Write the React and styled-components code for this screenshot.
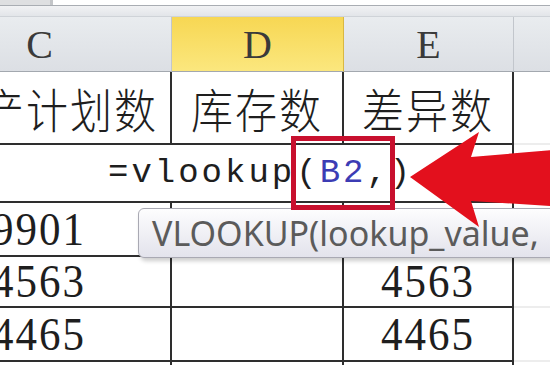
import React from "react";
import styled, { createGlobalStyle } from "styled-components";

const GlobalStyle = createGlobalStyle`
  html, body {
    margin: 0;
    padding: 0;
    background: #ffffff;
    overflow: hidden;
  }
`;

const Page = styled.div`
  position: relative;
  width: 550px;
  height: 365px;
  overflow: hidden;
  background: #ffffff;
`;

const FormulaStrip = styled.div`
  display: flex;
  height: 5px;
  border-bottom: 1px solid #a9adb3;
`;

const NameBox = styled.div`
  width: 50px;
  background: #dedfe1;
  border-right: 3px solid #c3c5c8;
`;

const FormulaInput = styled.div`
  flex: 1;
  background: #ffffff;
`;

const Band = styled.div`
  height: 10px;
  background: linear-gradient(#f1f2f4, #e2e5e9);
  border-bottom: 1px solid #cfd3d8;
`;

const Sheet = styled.div`
  display: grid;
  grid-template-columns: 264px 172px 170px 60px;
  grid-template-rows: 55px 73px 58px 54px 51px 54px 20px;
  margin-left: -92px;
`;

const ColHead = styled.div`
  display: flex;
  align-items: center;
  justify-content: center;
  box-sizing: border-box;
  border-right: 1px solid ${(p) => (p.$active ? "#d9b842" : "#c2c6cc")};
  border-bottom: 1px solid #a3a8af;
  background: ${(p) =>
    p.$active
      ? "linear-gradient(#f7d753, #fbe77e)"
      : "linear-gradient(#e9ecef, #dcdfe4)"};
  font-family: "Liberation Serif", serif;
  font-size: 40px;
  color: #3a3a3a;
`;

const Cell = styled.div`
  display: flex;
  align-items: center;
  justify-content: center;
  box-sizing: border-box;
  border-right: 2px solid ${(p) => (p.$blank ? "#ededed" : "#2e2e2e")};
  border-bottom: 2px solid ${(p) => (p.$blank ? "#ededed" : "#2e2e2e")};
  background: #ffffff;
  color: #1e1e1e;
  font-family: ${(p) =>
    p.$cjk
      ? '"Noto Sans CJK SC", sans-serif'
      : '"Liberation Serif", serif'};
  font-size: ${(p) => (p.$cjk ? "42px" : "43px")};
  font-weight: ${(p) => (p.$cjk ? 300 : 400)};
  letter-spacing: 2px;
  padding-left: ${(p) => p.$shift || 0}px;
  white-space: nowrap;
`;

const Tall = styled.span`
  display: inline-block;
  transform: scaleY(1.1);
`;

const EditCell = styled.div`
  grid-column: 1 / 4;
  position: relative;
  z-index: 3;
  display: flex;
  align-items: center;
  box-sizing: border-box;
  padding-left: 200px;
  border-right: 2px solid #2e2e2e;
  border-bottom: 2px solid #2e2e2e;
  background: #ffffff;
  font-family: "Liberation Mono", monospace;
  font-size: 34px;
  letter-spacing: 3px;
  color: #1e1e1e;
  white-space: nowrap;
`;

const RefBox = styled.span`
  display: inline-flex;
  align-items: center;
  height: 64px;
  margin: 0 -5px 0 -4px;
  border: 5px solid #c8102e;
`;

const RefName = styled.span`
  color: #3c3cb4;
`;

const Tooltip = styled.div`
  position: absolute;
  z-index: 2;
  left: 138px;
  top: 208px;
  width: 440px;
  height: 50px;
  box-sizing: border-box;
  padding-left: 13px;
  border: 1px solid #a9a9b3;
  border-radius: 6px;
  background: linear-gradient(#fdfdfe, #e3e3ec);
  box-shadow: 2px 3px 4px rgba(0, 0, 0, 0.2);
  font-family: "Noto Sans", sans-serif;
  font-size: 34px;
  line-height: 48px;
  color: #5b5b5b;
  white-space: nowrap;
`;

const Arrow = styled.svg`
  position: absolute;
  z-index: 4;
  left: 405px;
  top: 125px;
`;

const rows = [
  ["9901", "", ""],
  ["4563", "", "4563"],
  ["4465", "", "4465"],
];

export default function App() {
  return (
    <>
      <GlobalStyle />
      <Page>
        <FormulaStrip>
          <NameBox />
          <FormulaInput />
        </FormulaStrip>
        <Band />
        <Sheet>
          <ColHead>C</ColHead>
          <ColHead $active>D</ColHead>
          <ColHead>E</ColHead>
          <ColHead />

          <Cell $cjk $shift={18}>
            <Tall>生产计划数</Tall>
          </Cell>
          <Cell $cjk>
            <Tall>库存数</Tall>
          </Cell>
          <Cell $cjk>
            <Tall>差异数</Tall>
          </Cell>
          <Cell $blank />

          <EditCell>
            =vlookup
            <RefBox>
              (<RefName>B2</RefName>,
            </RefBox>
            )
          </EditCell>
          <Cell $blank />

          {rows.map((r, i) => (
            <React.Fragment key={i}>
              {r.map((v, j) => (
                <Cell key={j}>
                  <Tall>{v}</Tall>
                </Cell>
              ))}
              <Cell $blank />
            </React.Fragment>
          ))}

          <Cell />
          <Cell />
          <Cell />
          <Cell $blank />
        </Sheet>

        <Tooltip>VLOOKUP(lookup_value,</Tooltip>

        <Arrow width="150" height="110" viewBox="0 0 150 110">
          <polygon
            points="5,52 74,7 66,32 147,25 147,81 66,76 74,102"
            fill="#e3101d"
          />
        </Arrow>
      </Page>
    </>
  );
}
